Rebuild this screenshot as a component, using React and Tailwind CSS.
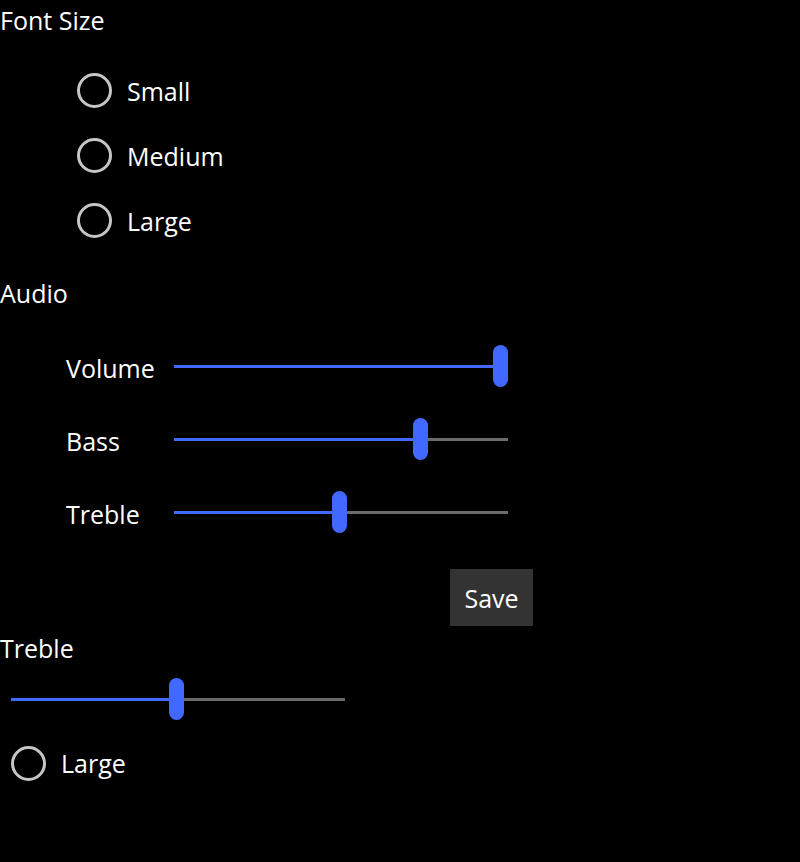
import React from 'react';

const Radio = ({ label }) => (
    <div className="h-[65px] flex items-center gap-[15px]">
        <div className="w-[35px] h-[35px] rounded-full border-[3px] border-[#c6c6c6]" />
        <span>{label}</span>
    </div>
);

// thumb is 15px wide, so it travels 319px along the 334px track
const Slider = ({ value }) => {
    const left = (value * 319) / 100;
    return (
        <div className="relative w-[334px] h-[42px] flex items-center">
            <div className="h-[3px] w-full bg-[#6b6b6b]" />
            <div className="absolute left-0 h-[3px] bg-[#4169ff]" style={{ width: left + 7 }} />
            <div className="absolute top-0 w-[15px] h-[42px] rounded-full bg-[#4169ff]" style={{ left }} />
        </div>
    );
};

const SliderRow = ({ label, value }) => (
    <div className="h-[73px] flex items-center pl-[66px]">
        <span className="w-[108px]">{label}</span>
        <div className="-mt-[3px]">
            <Slider value={value} />
        </div>
    </div>
);

export default function App() {
    return (
        <div className="min-h-screen bg-black text-white text-[25px] leading-[32px] font-['Open_Sans',sans-serif]">
            <div className="h-[40px] flex items-center">Font Size</div>
            <div className="mt-[18px] pl-[77px]">
                <Radio label="Small" />
                <Radio label="Medium" />
                <Radio label="Large" />
            </div>
            <div className="mt-[20px] h-[40px] flex items-center">Audio</div>
            <div className="mt-[18px]">
                <SliderRow label="Volume" value={100} />
                <SliderRow label="Bass" value={75} />
                <SliderRow label="Treble" value={49.5} />
            </div>
            <button className="mt-[19px] ml-[450px] w-[83px] h-[57px] bg-[#333333] text-white flex items-center justify-center">
                Save
            </button>
            <div className="mt-[2px] h-[40px] flex items-center">Treble</div>
            <div className="mt-[10px] ml-[11px]">
                <Slider value={49.5} />
            </div>
            <div className="mt-[18px] pl-[11px] h-[50px] flex items-center gap-[15px]">
                <div className="w-[35px] h-[35px] rounded-full border-[3px] border-[#c6c6c6]" />
                <span>Large</span>
            </div>
        </div>
    );
}
